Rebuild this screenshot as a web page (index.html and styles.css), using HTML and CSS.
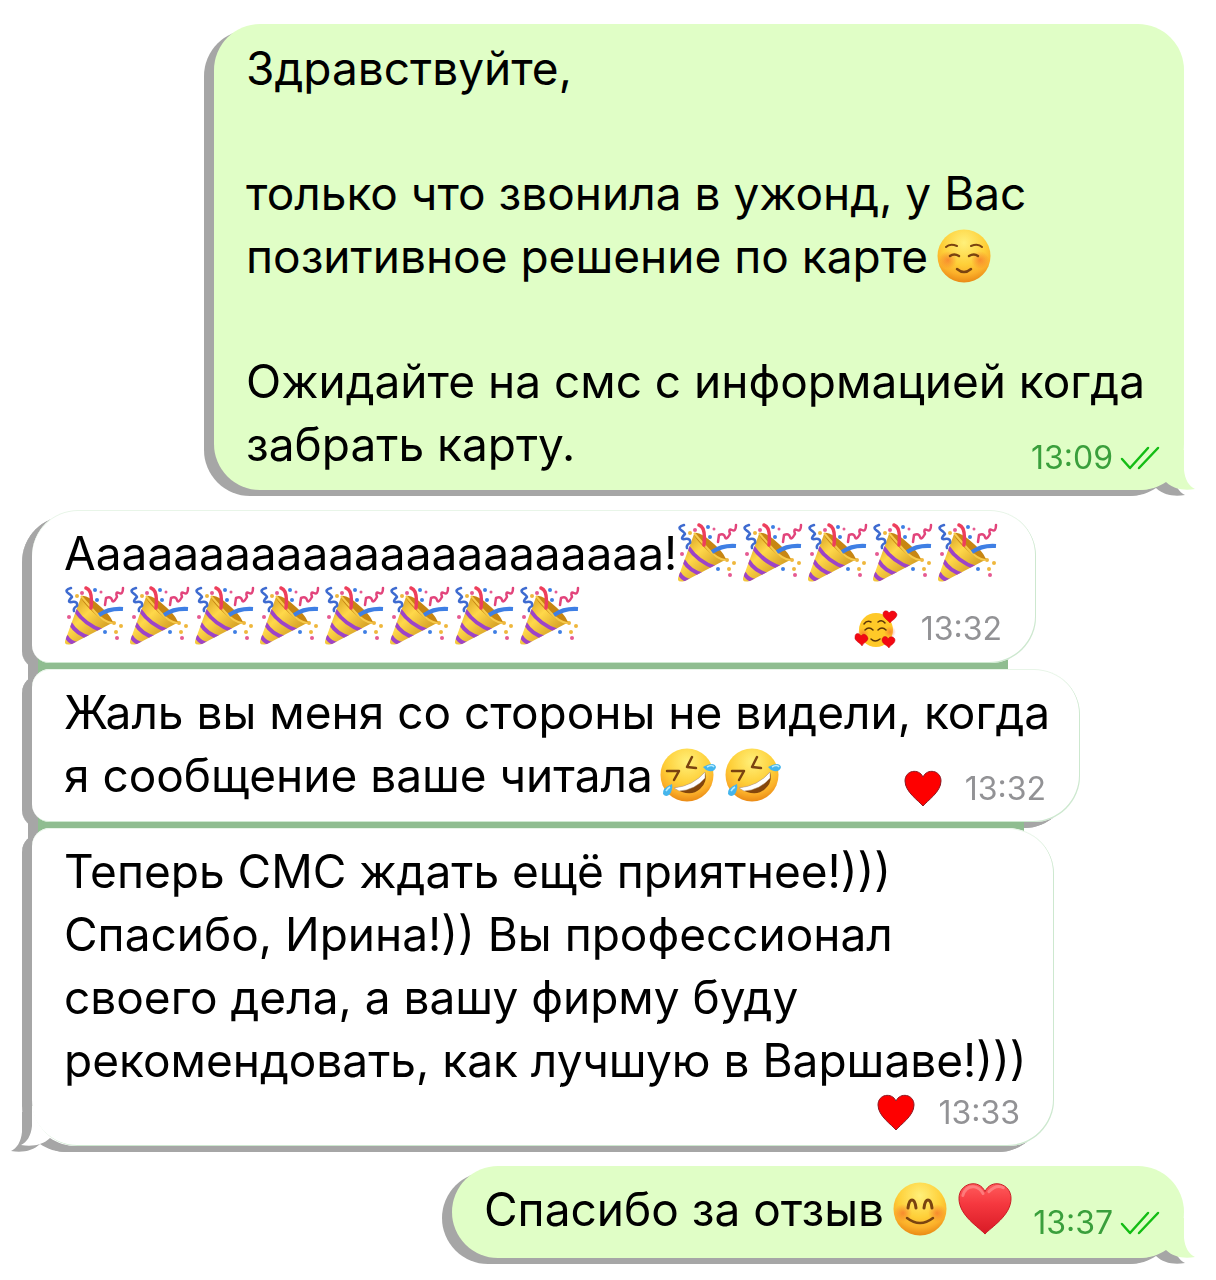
FILE: index.html
```html
<!DOCTYPE html>
<html lang="ru">
<head>
<meta charset="utf-8">
<meta name="viewport" content="width=device-width, initial-scale=1">
<title>Переписка</title>
<link rel="stylesheet" href="styles.css">
</head>
<body>
<svg class="defs" aria-hidden="true">
  <defs>
    <radialGradient id="skin" cx="50%" cy="25%" r="75%">
      <stop offset="0" stop-color="#fff07a"/>
      <stop offset=".55" stop-color="#fecf38"/>
      <stop offset=".8" stop-color="#fbb02a"/>
      <stop offset="1" stop-color="#ea8a15"/>
    </radialGradient>
    <radialGradient id="blush">
      <stop offset="0" stop-color="#f4622a" stop-opacity=".6"/>
      <stop offset="1" stop-color="#f4622a" stop-opacity="0"/>
    </radialGradient>
    <linearGradient id="heartRed" x1="0" y1="0" x2="0" y2="1">
      <stop offset="0" stop-color="#ff5b5b"/>
      <stop offset=".4" stop-color="#f5383f"/>
      <stop offset="1" stop-color="#d81a25"/>
    </linearGradient>
    <linearGradient id="cone" x1="0" y1="0" x2="1" y2="1">
      <stop offset="0" stop-color="#c98a14"/>
      <stop offset=".4" stop-color="#ffd84a"/>
      <stop offset="1" stop-color="#b87708"/>
    </linearGradient>
    <clipPath id="coneClip"><path d="M16 11L0 55Q-1 60 7 58L49 36Z"/></clipPath>
  </defs>
  <symbol id="relaxed" viewBox="0 0 54 54">
    <circle cx="27" cy="27" r="26.500" fill="url(#skin)"/>
    <circle cx="11" cy="31" r="9" fill="url(#blush)"/><circle cx="43" cy="31" r="9" fill="url(#blush)"/>
    <g fill="none" stroke="#7a4310" stroke-width="2" stroke-linecap="round">
      <path d="M9 18Q13 14 20 17M34 17Q41 14 45 18"/>
      <path stroke-width="2.500" d="M13 27Q17 24 22 27M32 27Q37 24 41 27M20 40Q27 46 34 40"/>
    </g>
  </symbol>
  <symbol id="smile" viewBox="0 0 54 54">
    <circle cx="27" cy="27" r="26.500" fill="url(#skin)"/>
    <circle cx="10" cy="31" r="9" fill="url(#blush)"/><circle cx="44" cy="31" r="9" fill="url(#blush)"/>
    <g fill="none" stroke="#7a4310" stroke-linecap="round">
      <path stroke-width="3" d="M15 26Q16 18 19 18T23 26M31 26Q32 18 35 18T39 26"/>
      <path stroke-width="2.500" d="M14 36Q27 46 40 36"/>
    </g>
  </symbol>
  <symbol id="rofl" viewBox="0 0 58 54">
    <circle cx="28" cy="27" r="26.500" fill="url(#skin)"/>
    <g fill="none" stroke="#7a4310" stroke-width="2.500" stroke-linecap="round" stroke-linejoin="round">
      <path d="M33 9L28 19L37 20M8 23L20 23L15 32"/>
    </g>
    <path d="M15 40Q34 38 46 24Q49 34 41 41Q31 50 15 40Z" fill="#83460c"/>
    <path d="M15 40Q34 38 46 24L46 30Q36 42 20 43Z" fill="#fff" stroke="#b9a184" stroke-width=".5"/>
    <path d="M44 19Q55 13 57 19Q56 24 50 23Q46 22 44 19Z" fill="#45b5ec"/>
    <path d="M13 36Q3 40 4 46Q7 50 11 46Q14 41 13 36Z" fill="#45b5ec"/>
    <path d="M48 19Q53 16 55 19M7 43Q9 40 11 39" stroke="#b9ebff" stroke-width="1.500" fill="none"/>
  </symbol>
  <symbol id="bigheart" viewBox="0 0 56 54">
    <path d="M28 53C22 46 1 34 1 16C1 0 22-5 28 9C34-5 55 0 55 16C55 34 34 46 28 53Z" fill="url(#heartRed)" stroke="#c71923"/>
    <path d="M5 13Q8 3 17 4Q23 5 26 11M32 9Q40 1 47 5" fill="none" stroke="#ff9b99" stroke-width="3" stroke-linecap="round" opacity=".6"/>
  </symbol>
  <symbol id="heart" viewBox="0 0 38 37">
    <path d="M19 36C15 31 1 22 1 11C1 0 15-2 19 7C23-2 37 0 37 11C37 22 23 31 19 36Z" fill="#fe0000" stroke="#8c1a24"/>
  </symbol>
  <symbol id="adored" viewBox="0 0 44 38">
    <circle cx="22" cy="20" r="17" fill="#ffc928"/>
    <circle cx="9" cy="24" r="6" fill="url(#blush)"/><circle cx="36" cy="22" r="6" fill="url(#blush)"/>
    <path d="M10 14Q13 10 17 12M24 12Q28 9 31 13M11 20Q15 16 19 20M24 20Q28 16 32 20M17 29Q21 33 26 29" fill="none" stroke="#5c3508" stroke-width="1.500" stroke-linecap="round"/>
    <g fill="#f30812" stroke="#c40812" stroke-width=".5">
      <path d="M36 13C34 10 29 8 29 4C29 0 34 0 35 3C38-1 43 2 43 5C42 9 38 10 36 13Z"/>
      <path d="M8 36C7 33 0 31 1 27C1 22 6 23 7 26C10 22 14 26 14 29C13 32 9 33 8 36Z"/>
      <path d="M35 38C33 35 28 34 28 30C28 26 33 25 34 29C36 25 41 27 41 30C41 34 36 35 35 38Z"/>
    </g>
  </symbol>
  <symbol id="party" viewBox="0 0 60 60">
    <path d="M16 11L0 55Q-1 60 7 58L49 36Z" fill="url(#cone)"/>
    <g clip-path="url(#coneClip)" fill="none" stroke="#9d43c8" stroke-width="4">
      <path d="M10 24Q20 39 38 45M5 37Q12 49 26 52M1 50Q5 57 13 58"/>
    </g>
    <path d="M16 10Q22 8 36 21Q49 33 47 37Q42 39 29 27Q15 14 16 10Z" fill="#c78612"/>
    <path d="M16 10Q21 16 30 26T47 37" fill="none" stroke="#f7cb4b" stroke-width="2"/>
    <g fill="none" stroke-linecap="round" stroke-linejoin="round">
      <path d="M21 2Q28 4 26 22" stroke="#ee3e5c" stroke-width="3.500"/>
      <path d="M34 29Q44 22 58 23" stroke="#3f7fe4" stroke-width="4" stroke-linecap="butt"/>
      <path d="M40 19L41 12Q46 10 47 14T52 11Q50 5 54 7T58 2" stroke="#e2447b" stroke-width="2.500"/>
      <path d="M6 2Q-1 4 3 7T7 11Q1 17 7 16T12 20Q8 22 9 25" stroke="#3e6bd0" stroke-width="2.500"/>
    </g>
    <g fill="#3f7fe4"><circle cx="30" cy="4" r="2"/><circle cx="32" cy="14" r="2"/><circle cx="40" cy="46" r="2"/></g>
    <g fill="#e65a92"><circle cx="17" cy="7" r="2"/><circle cx="36" cy="6" r="1.500"/><circle cx="4" cy="31" r="2"/><circle cx="52" cy="52" r="2"/></g>
    <g fill="#efb73d"><circle cx="12" cy="10" r="2"/><circle cx="49" cy="37" r="2"/><circle cx="51" cy="46" r="2"/><circle cx="56" cy="40" r="2"/></g>
  </symbol>
  <symbol id="ticks" viewBox="0 0 40 24">
    <path d="M2 13L10 22L28 2M19 22L38 2" fill="none" stroke="#14bd14" stroke-width="2.500" stroke-linecap="round" stroke-linejoin="round"/>
  </symbol>
  <symbol id="tail" viewBox="0 0 60 40">
    <path d="M0 0H49V20C50 30 54 36 60 39C49 41 38 39 31 32C24 37 14 40 5 40H0Z"/>
  </symbol>
</svg>

<main class="chat">
  <section class="group group-out">
    <article class="bubble out wide">
      <p>Здравствуйте,</p>
      <p class="blank"></p>
      <p>только что звонила в ужонд, у Вас</p>
      <p>позитивное решение по карте<svg class="emoji" role="img" aria-label="улыбка"><use href="#relaxed"/></svg></p>
      <p class="blank"></p>
      <p>Ожидайте на смс с информацией когда</p>
      <div class="last">
        <p>забрать карту.</p>
        <footer class="meta"><time>13:09</time><svg class="ticks" role="img" aria-label="прочитано"><use href="#ticks"/></svg></footer>
      </div>
      <svg class="tail" aria-hidden="true"><use href="#tail"/></svg>
    </article>
  </section>

  <section class="group group-in">
    <article class="bubble in first">
      <p>Ааааааааааааааааааааааа!<svg class="emoji party"><use href="#party"/></svg><svg class="emoji party"><use href="#party"/></svg><svg class="emoji party"><use href="#party"/></svg><svg class="emoji party"><use href="#party"/></svg><svg class="emoji party"><use href="#party"/></svg></p>
      <div class="last">
        <p><svg class="emoji party"><use href="#party"/></svg><svg class="emoji party"><use href="#party"/></svg><svg class="emoji party"><use href="#party"/></svg><svg class="emoji party"><use href="#party"/></svg><svg class="emoji party"><use href="#party"/></svg><svg class="emoji party"><use href="#party"/></svg><svg class="emoji party"><use href="#party"/></svg><svg class="emoji party"><use href="#party"/></svg></p>
        <footer class="meta"><svg class="reaction adored" role="img" aria-label="обожаю"><use href="#adored"/></svg><time>13:32</time></footer>
      </div>
    </article>
    <article class="bubble in middle">
      <p>Жаль вы меня со стороны не видели, когда</p>
      <div class="last">
        <p>я сообщение ваше читала<svg class="emoji rofl"><use href="#rofl"/></svg><svg class="emoji rofl"><use href="#rofl"/></svg></p>
        <footer class="meta"><svg class="reaction" role="img" aria-label="сердце"><use href="#heart"/></svg><time>13:32</time></footer>
      </div>
    </article>
    <article class="bubble in final">
      <p>Теперь СМС ждать ещё приятнее!)))</p>
      <p>Спасибо, Ирина!)) Вы профессионал</p>
      <p>своего дела, а вашу фирму буду</p>
      <p>рекомендовать, как лучшую в Варшаве!)))</p>
      <footer class="meta"><svg class="reaction" role="img" aria-label="сердце"><use href="#heart"/></svg><time>13:33</time></footer>
      <svg class="tail" aria-hidden="true"><use href="#tail"/></svg>
    </article>
  </section>

  <section class="group group-out">
    <article class="bubble out short">
      <div class="last">
        <p>Спасибо за отзыв<svg class="emoji"><use href="#smile"/></svg><svg class="emoji"><use href="#bigheart"/></svg></p>
        <footer class="meta"><time>13:37</time><svg class="ticks" role="img" aria-label="прочитано"><use href="#ticks"/></svg></footer>
      </div>
      <svg class="tail" aria-hidden="true"><use href="#tail"/></svg>
    </article>
  </section>
</main>
</body>
</html>
```
FILE: styles.css
```css
* { box-sizing: border-box; }

body {
  margin: 0;
  background: #fff;
  color: #000;
  font: 46px/63px Inter, "Noto Sans", sans-serif;
}

p { margin: 0; }
.blank { height: 62px; }
.defs { position: absolute; width: 0; height: 0; }

.chat {
  display: flex;
  flex-direction: column;
  gap: 20px;
  padding: 24px 32px 22px;
}

/* The shadow follows the joined outline of all bubbles in a group. */
.group {
  display: flex;
  flex-direction: column;
  gap: 6px;
  isolation: isolate;
  filter: drop-shadow(-10px 6px 0 #a6a6a6);
}
.group-out { align-items: flex-end; }
.group-in { align-items: flex-start; }

.bubble {
  position: relative;
  display: flex;
  flex-direction: column;
  width: 100%;
  padding: 12px 24px 15px 32px;
  border-radius: 46px;
}
.out { background: #e0fec6; }
.in {
  background: #fff;
  box-shadow: inset -1px -1px 0 #cde8cf, inset 0 1px 0 #e8f5e8;
}

.wide { max-width: 970px; padding-top: 13px; padding-bottom: 14px; }
.short { max-width: 732px; padding-bottom: 17px; }
.first { max-width: 1004px; border-bottom-left-radius: 18px; }
.middle { max-width: 1048px; border-top-left-radius: 18px; border-bottom-left-radius: 18px; }
.final { max-width: 1022px; border-top-left-radius: 18px; }

/* Strip of chat wallpaper showing between joined bubbles. */
.first::after, .middle::after {
  content: "";
  position: absolute;
  z-index: -1;
  left: 6px;
  right: 28px;
  bottom: -14px;
  height: 22px;
  background: #8fbd90;
}
.middle::after { right: 56px; }

.last {
  display: flex;
  justify-content: space-between;
  align-items: flex-end;
}

.meta {
  display: flex;
  align-items: center;
  align-self: flex-end;
  gap: 7px;
  font-size: 32px;
  line-height: 36px;
  color: #929295;
}
.in .meta { gap: 23px; margin-right: 10px; }
.out .meta { color: #3a9f3c; }
.final .meta { margin-top: 2px; }

.emoji {
  width: 54px;
  height: 54px;
  margin: 0 2px 0 9px;
  vertical-align: -10px;
}
.rofl { width: 58px; margin: 0 1px 0 6px; }
.party { width: 60px; height: 60px; margin: 0 4px 0 1px; vertical-align: -13px; }
.ticks { width: 40px; height: 24px; }
.reaction { width: 38px; height: 37px; }
.adored { width: 44px; height: 38px; }

.tail {
  position: absolute;
  z-index: -1;
  right: -11px;
  bottom: 0;
  width: 60px;
  height: 40px;
  fill: #e0fec6;
}
.in .tail {
  right: auto;
  left: -11px;
  fill: #fff;
  transform: scaleX(-1);
}
```
